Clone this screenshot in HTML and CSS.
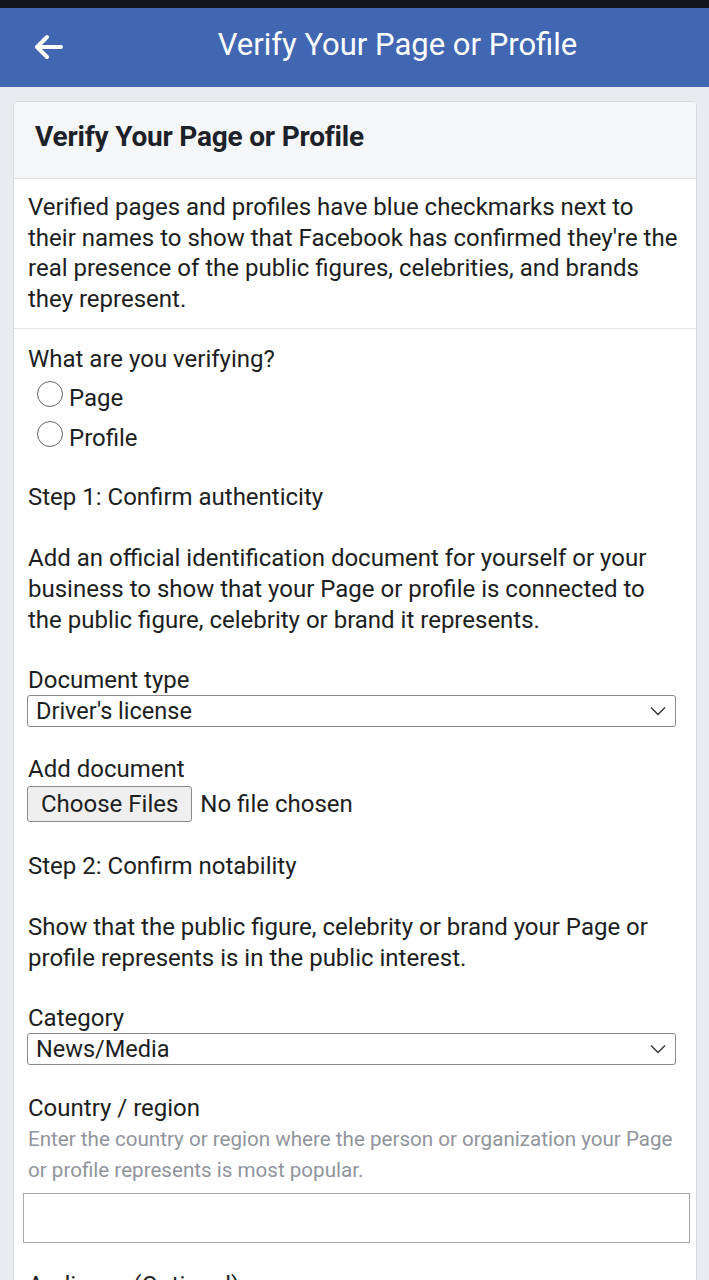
FILE: index.html
```html
<!DOCTYPE html>
<html>
<head>
<meta charset="utf-8">
<link rel="stylesheet" href="styles.css">
</head>
<body>
<div class="status"></div>
<header class="topbar">
  <span class="back"><svg width="32" height="28" viewBox="0 0 32 28"><path d="M29 14H5M15 4L5 14l10 10" fill="none" stroke="#fff" stroke-width="4" stroke-linecap="round" stroke-linejoin="round"/></svg></span>
  <h1 class="topbar-title">Verify Your Page or Profile</h1>
</header>
<main class="page">
  <section class="card">
    <div class="card-head">Verify Your Page or Profile</div>
    <p class="intro">Verified pages and profiles have blue checkmarks next to their names to show that Facebook has confirmed they're the real presence of the public figures, celebrities, and brands they represent.</p>
    <div class="form">
      <div class="question">What are you verifying?</div>
      <label class="radio-row first"><span class="radio"></span>Page</label>
      <label class="radio-row"><span class="radio"></span>Profile</label>
      <div class="step">Step 1: Confirm authenticity</div>
      <p class="text">Add an official identification document for yourself or your business to show that your Page or profile is connected to the public figure, celebrity or brand it represents.</p>
      <div class="label">Document type</div>
      <div class="select"><span>Driver's license</span><svg width="16" height="10" viewBox="0 0 16 10"><path d="M1 1.5l7 7 7-7" fill="none" stroke="#333" stroke-width="1.4"/></svg></div>
      <div class="label label-add">Add document</div>
      <div class="file"><span class="file-btn">Choose Files</span><span class="file-none">No file chosen</span></div>
      <div class="step step2">Step 2: Confirm notability</div>
      <p class="text">Show that the public figure, celebrity or brand your Page or profile represents is in the public interest.</p>
      <div class="label">Category</div>
      <div class="select"><span>News/Media</span><svg width="16" height="10" viewBox="0 0 16 10"><path d="M1 1.5l7 7 7-7" fill="none" stroke="#333" stroke-width="1.4"/></svg></div>
      <div class="label label-country">Country / region</div>
      <div class="hint">Enter the country or region where the person or organization your Page or profile represents is most popular.</div>
      <div class="input"></div>
      <div class="label label-aud">Audience (Optional)</div>
    </div>
  </section>
</main>
</body>
</html>
```
FILE: styles.css
```css
* { box-sizing: border-box; }
html, body { margin: 0; padding: 0; }
body {
  background: #e9ebee;
  font-family: Roboto, "Noto Sans", sans-serif;
  color: #1c1e21;
  width: 709px;
  height: 1280px;
  overflow: hidden;
}
.status { height: 8px; background: #12151a; }
.topbar {
  height: 79px;
  background: #4267b2;
  display: flex;
  align-items: center;
  position: relative;
}
.back { position: absolute; left: 32px; top: 25px; display: flex; }
.topbar-title {
  margin: 0;
  width: 100%;
  text-align: center;
  color: #fff;
  font-weight: 400;
  font-size: 31px;
  padding-left: 86px;
  line-height: 36px;
  position: relative;
  top: -3px;
}
.page { padding: 14px 12px 0 13px; }
.card {
  background: #fff;
  border: 1px solid #d7d9dd;
  border-radius: 4px;
  overflow: hidden;
  height: 1300px;
}
.card-head {
  background: #f5f6f7;
  height: 77px;
  border-bottom: 1px solid #dddfe2;
  padding: 18px 0 0 21px;
  font-weight: 700;
  font-size: 28px;
  letter-spacing: -0.2px;
  color: #1d2129;
}
.intro {
  margin: 0;
  padding: 13px 12px 13px 14px;
  font-size: 24px;
  line-height: 30.7px;
  border-bottom: 1px solid #e5e6e9;
  color: #1c1e21;
}
.form { padding: 15px 20px 0 14px; font-size: 24px; color: #1c1e21; }
.question { line-height: 30px; }
.radio-row { display: flex; align-items: center; height: 40px; padding-left: 9px; line-height: 30px; }
.radio-row.first { margin-top: 4px; }
.radio {
  width: 26px; height: 26px;
  border: 1.5px solid #666;
  border-radius: 50%;
  margin-right: 6px;
  position: relative;
  top: -4px;
}
.step { margin-top: 24px; line-height: 30px; }
.text { margin: 31.5px 0 0; line-height: 31px; }
.label { margin-top: 28.5px; line-height: 30px; }
.label-add { margin-top: 27px; }
.select {
  margin-left: -1px;
  height: 32px;
  border: 1px solid #8a8a8a;
  border-radius: 3px;
  display: flex;
  align-items: center;
  justify-content: space-between;
  padding: 0 9px 0 8px;
  font-size: 23.5px;
}
.file { display: flex; align-items: center; margin-top: 2px; margin-left: -1px; }
.file-btn {
  height: 36px;
  border: 1px solid #8a8a8a;
  border-radius: 3px;
  background: #efefef;
  padding: 0 13px;
  display: flex;
  align-items: center;
}
.file-none { margin-left: 8px; }
.step2 { margin-top: 29px; }
.label-country { margin-top: 28px; }
.hint { color: #90949c; font-size: 20.6px; line-height: 31px; margin-top: 1.5px; }
.input { margin: 6.5px -14px 0 -5px; height: 50px; border: 1px solid #a8a8a8; }
.label-aud { margin-top: 27px; }
```
